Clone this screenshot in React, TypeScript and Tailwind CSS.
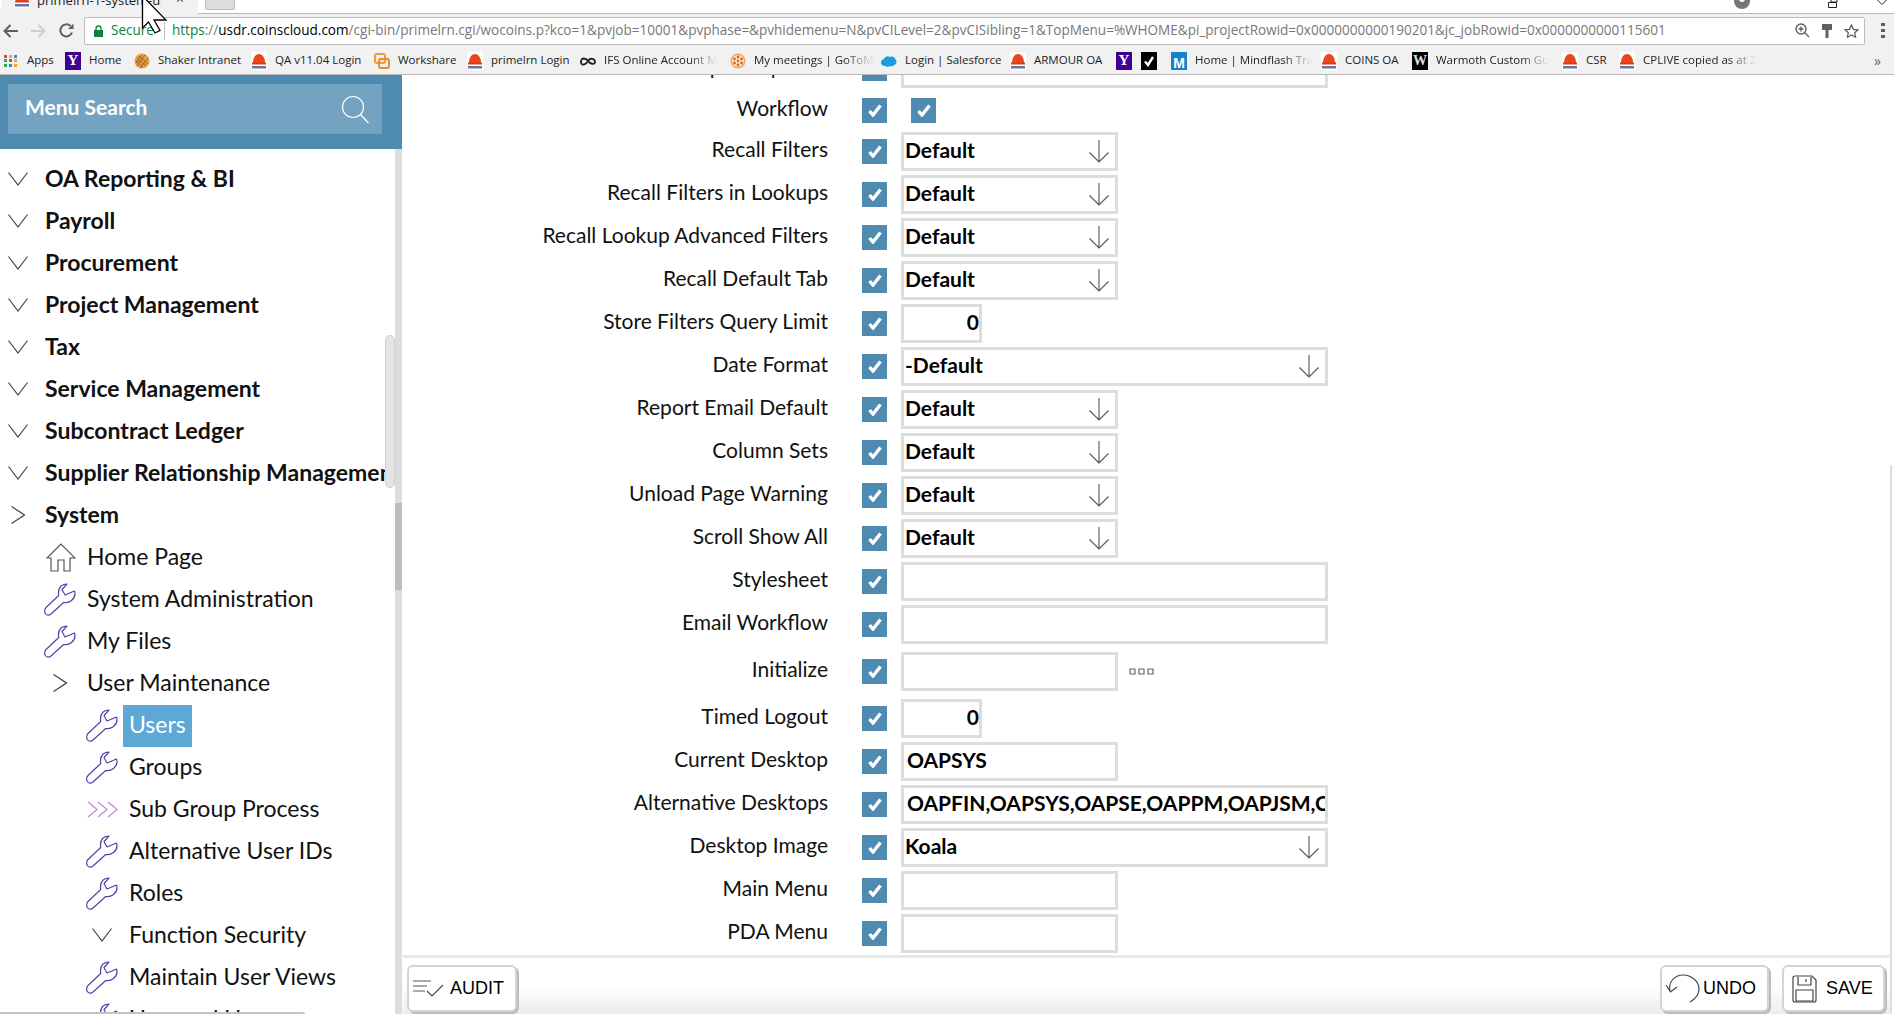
import { ReactNode } from 'react';

const lato = 'font-["Lato",sans-serif]';

function CoinsIcon() {
  return (
    <svg width="16" height="18" viewBox="0 0 16 18" className="shrink-0">
      <rect width="16" height="18" fill="#fff" />
      <path d="M2 11C2 5 5 2 8 2s6 3 6 9z" fill="#e8481c" />
      <rect x="1" y="10.5" width="14" height="2" fill="#d93c12" />
      <rect x="1" y="14" width="14" height="2.5" fill="#33478f" opacity="0.75" />
    </svg>
  );
}

function YahooIcon() {
  return (
    <div className={`w-[16px] h-[18px] shrink-0 bg-[#400090] flex items-center justify-center text-white text-[15px] font-bold leading-none font-["Liberation_Serif",serif]`}>
      Y
    </div>
  );
}

function AppsIcon() {
  const colors = ['#d9453b', '#f2a917', '#3f82ee', '#34a853', '#d9453b', '#f2a917', '#34a853', '#3f82ee', '#f2a917'];
  return (
    <div className="grid grid-cols-3 gap-[1.5px] w-[13px] shrink-0 ml-[1px]">
      {colors.map((c, i) => (
        <svg key={i} width="3" height="3"><rect width="3" height="3" fill={c} /></svg>
      ))}
    </div>
  );
}

function ShakerIcon() {
  return (
    <svg width="16" height="16" viewBox="0 0 16 16" className="shrink-0">
      <circle cx="8" cy="8" r="7.5" fill="#e6a24a" />
      <path d="M3 5l9 8M5 3l9 8M2 8l7 6M11 2l-8 11M14 5l-8 10M8 2l-6 8" stroke="#9a5a12" strokeWidth="0.9" />
    </svg>
  );
}

function WorkshareIcon() {
  return (
    <svg width="16" height="18" viewBox="0 0 16 18" fill="none" className="shrink-0">
      <rect x="1" y="2" width="10" height="9" rx="2" stroke="#ee9a3a" strokeWidth="2" />
      <rect x="5" y="7" width="10" height="9" rx="2" stroke="#ee8a2a" strokeWidth="2" />
    </svg>
  );
}

function IfsIcon() {
  return (
    <svg width="16" height="10" viewBox="0 0 16 10" fill="none" className="shrink-0">
      <path d="M1 6c0-5 5-4 7-1s7 4 7 1-5-5-7-1-7 5-7 1z" stroke="#222" strokeWidth="1.8" />
    </svg>
  );
}

function GoToIcon() {
  return (
    <svg width="16" height="18" viewBox="0 0 16 18" className="shrink-0">
      <circle cx="8" cy="9" r="7.5" fill="#f0a35e" />
      <circle cx="8" cy="9" r="6" fill="#fbe6d2" />
      {[[8, 5], [8, 13], [4.5, 7], [11.5, 7], [4.5, 11], [11.5, 11], [8, 9]].map(([x, y], i) => (
        <circle key={i} cx={x} cy={y} r="1.4" fill="#d9681d" />
      ))}
    </svg>
  );
}

function CloudIcon() {
  return (
    <svg width="16" height="12" viewBox="0 0 16 12" className="shrink-0">
      <path d="M4 11C1 11 0 9 0 7.5S1.5 4 3 4c1-2.5 4-3.5 6-2 2-1 5 0 5.5 2.5C16 5.5 16 10 13 10c-1 1.5-3 1.5-4 1-1.5 1-3.5 1-5 0z" fill="#1b9ddb" />
    </svg>
  );
}

function CheckTile() {
  return (
    <div className="w-[16px] h-[18px] shrink-0 bg-black flex items-center justify-center">
      <svg width="12" height="12" viewBox="0 0 12 12" fill="none">
        <path d="M2 6.5L5 10 10 2" stroke="#fff" strokeWidth="2.4" />
      </svg>
    </div>
  );
}

function MindflashIcon() {
  return (
    <div className="w-[16px] h-[18px] shrink-0 bg-[#1583c9] flex items-end justify-center text-white text-[14px] font-bold leading-none font-['Liberation_Sans',sans-serif]">
      M
    </div>
  );
}

function WarmothIcon() {
  return (
    <div className="w-[16px] h-[18px] shrink-0 bg-black flex items-center justify-center text-[#ddd] text-[14px] font-bold leading-none font-['Liberation_Serif',serif]">
      W
    </div>
  );
}

const bookmarks: { icon: ReactNode; label?: string; width: string; fade?: boolean }[] = [
  { icon: <AppsIcon />, label: 'Apps', width: 'w-[62px]' },
  { icon: <YahooIcon />, label: 'Home', width: 'w-[69px]' },
  { icon: <ShakerIcon />, label: 'Shaker Intranet', width: 'w-[117px]' },
  { icon: <CoinsIcon />, label: 'QA v11.04 Login', width: 'w-[123px]' },
  { icon: <WorkshareIcon />, label: 'Workshare', width: 'w-[93px]' },
  { icon: <CoinsIcon />, label: 'primelrn Login', width: 'w-[113px]' },
  { icon: <IfsIcon />, label: 'IFS Online Account M', width: 'w-[150px]', fade: true },
  { icon: <GoToIcon />, label: 'My meetings | GoToM', width: 'w-[151px]', fade: true },
  { icon: <CloudIcon />, label: 'Login | Salesforce', width: 'w-[129px]' },
  { icon: <CoinsIcon />, label: 'ARMOUR OA', width: 'w-[106px]' },
  { icon: <YahooIcon />, width: 'w-[25px]' },
  { icon: <CheckTile />, width: 'w-[30px]' },
  { icon: <MindflashIcon />, label: 'Home | Mindflash Tra', width: 'w-[150px]', fade: true },
  { icon: <CoinsIcon />, label: 'COINS OA', width: 'w-[91px]' },
  { icon: <WarmothIcon />, label: 'Warmoth Custom Gu', width: 'w-[150px]', fade: true },
  { icon: <CoinsIcon />, label: 'CSR', width: 'w-[57px]' },
  { icon: <CoinsIcon />, label: 'CPLIVE copied as at 2', width: 'w-[145px]', fade: true },
];

function ChevronDown({ className = 'ml-[8px] mr-[17px]' }: { className?: string }) {
  return (
    <svg width="20" height="14" viewBox="0 0 20 14" fill="none" className={`shrink-0 ${className}`}>
      <path d="M0.5 0.5L10 13L19.5 0.5" stroke="#444" strokeWidth="1.2" />
    </svg>
  );
}

function ChevronRight({ className }: { className: string }) {
  return (
    <svg width="14" height="18" viewBox="0 0 14 18" fill="none" className={`shrink-0 ${className}`}>
      <path d="M0.5 0.5L13.5 9L0.5 17.5" stroke="#444" strokeWidth="1.2" />
    </svg>
  );
}

function WrenchIcon() {
  return (
    <svg width="32" height="33" viewBox="0 0 32 33" fill="none" className="shrink-0">
      <path
        d="M14.7 12.5C14 8 15 5 17 3C19 1.5 21 1 23 1L18 6.5L21 12L30.5 8C31.5 11 30.5 15 27.5 17.5C25 19.5 22 20 19.7 19.5L7 31C5 32.5 2.5 32.5 1.3 30.5C0.3 29 0.5 26 2 24.5Z"
        stroke="#5a3fa8"
        strokeWidth="1.2"
        strokeLinejoin="round"
      />
    </svg>
  );
}

function HomeIcon() {
  return (
    <svg width="30" height="29" viewBox="0 0 30 29" fill="none" className="shrink-0">
      <path d="M1 15L15 1L29 15H24V28H18V17H12V28H5V15Z" stroke="#555" strokeWidth="1.2" strokeLinejoin="miter" />
    </svg>
  );
}

function TripleChevron() {
  return (
    <svg width="31" height="17" viewBox="0 0 31 17" fill="none" className="shrink-0">
      <path d="M1 1L10 8.5L1 16M11 1L20 8.5L11 16M21 1L30 8.5L21 16" stroke="#c48ae0" strokeWidth="1.3" />
    </svg>
  );
}

function CheckBox() {
  return (
    <div className="w-[25px] h-[25px] shrink-0 bg-[#4f8bb1] flex items-center justify-center">
      <svg width="14" height="13" viewBox="0 0 14 13" fill="none">
        <path d="M1.5 7L5 11L12.5 1.5" stroke="#fff" strokeWidth="3.4" />
      </svg>
    </div>
  );
}

function SelectBox({ value, width }: { value?: string; width: string }) {
  return (
    <div className={`h-[39px] border-[3px] border-[#ddd] flex items-center justify-between pl-[1px] pr-[6px] ${width}`}>
      <span className="text-[21px] font-bold text-black pb-[3px]">{value}</span>
      <svg width="20" height="23" viewBox="0 0 20 23" fill="none" className="shrink-0">
        <path d="M10 0V22M0.5 12.5L10 22L19.5 12.5" stroke="#555" strokeWidth="1.1" />
      </svg>
    </div>
  );
}

function TextBox({ value, width, right }: { value?: string; width: string; right?: boolean }) {
  return (
    <div className={`h-[39px] border-[3px] border-[#ddd] flex items-center overflow-hidden whitespace-nowrap text-[21px] font-bold text-black pb-[3px] ${right ? 'justify-end pr-[0px]' : 'pl-[3px]'} ${width}`}>
      {value}
    </div>
  );
}

type Row = {
  label: string;
  field: ReactNode;
  rowClass?: string;
};

const sel = 'w-[217px]';
const small = 'w-[81px]';
const wide = 'w-[427px]';

const rows: Row[] = [
  { label: 'Workflow', rowClass: 'h-[40px] pt-[1px]', field: <div className="ml-[10px]"><CheckBox /></div> },
  { label: 'Recall Filters', field: <SelectBox value="Default" width={sel} /> },
  { label: 'Recall Filters in Lookups', field: <SelectBox value="Default" width={sel} /> },
  { label: 'Recall Lookup Advanced Filters', field: <SelectBox value="Default" width={sel} /> },
  { label: 'Recall Default Tab', field: <SelectBox value="Default" width={sel} /> },
  { label: 'Store Filters Query Limit', field: <TextBox value="0" width={small} right /> },
  { label: 'Date Format', field: <SelectBox value="-Default" width={wide} /> },
  { label: 'Report Email Default', field: <SelectBox value="Default" width={sel} /> },
  { label: 'Column Sets', field: <SelectBox value="Default" width={sel} /> },
  { label: 'Unload Page Warning', field: <SelectBox value="Default" width={sel} /> },
  { label: 'Scroll Show All', field: <SelectBox value="Default" width={sel} /> },
  { label: 'Stylesheet', field: <TextBox width={wide} /> },
  { label: 'Email Workflow', field: <TextBox width={wide} /> },
  {
    label: 'Initialize',
    rowClass: 'h-[43px] mt-[4px]',
    field: (
      <div className="flex items-center gap-[11px]">
        <TextBox width={sel} />
        <svg width="25" height="7" viewBox="0 0 25 7" fill="none">
          <path d="M1 1h5v5H1zM10 1h5v5h-5zM19 1h5v5h-5z" stroke="#666" strokeWidth="1.2" />
        </svg>
      </div>
    ),
  },
  { label: 'Timed Logout', rowClass: 'h-[43px] mt-[4px]', field: <TextBox value="0" width={small} right /> },
  { label: 'Current Desktop', field: <TextBox value="OAPSYS" width={sel} /> },
  { label: 'Alternative Desktops', field: <TextBox value="OAPFIN,OAPSYS,OAPSE,OAPPM,OAPJSM,C" width={wide} /> },
  { label: 'Desktop Image', field: <SelectBox value="Koala" width={wide} /> },
  { label: 'Main Menu', field: <TextBox width={sel} /> },
  { label: 'PDA Menu', field: <TextBox width={sel} /> },
];

function FormRow({ label, field, rowClass = 'h-[43px]' }: Row) {
  return (
    <div className={`flex items-center ${rowClass}`}>
      <div className="w-[426px] pb-[6px] text-right text-[21px] text-[#111] whitespace-nowrap">{label}</div>
      <div className="ml-[34px]">
        <CheckBox />
      </div>
      <div className="ml-[14px]">{field}</div>
    </div>
  );
}

function MenuRow({ icon, label, bold, active }: { icon: ReactNode; label: string; bold?: boolean; active?: boolean }) {
  return (
    <div className={`h-[42px] shrink-0 flex items-center whitespace-nowrap text-[23px] text-[#111] ${bold ? 'font-bold' : ''}`}>
      {icon}
      {active ? (
        <span className="ml-[5px] translate-y-[1px] h-[42px] flex items-center pb-[4px] px-[6px] bg-[#5ea8d8] text-white">{label}</span>
      ) : (
        <span className="pb-[1px]">{label}</span>
      )}
    </div>
  );
}

function IconSlot({ children, width }: { children: ReactNode; width: string }) {
  return <div className={`shrink-0 flex items-center ${width}`}>{children}</div>;
}

function FooterButton({ children, width }: { children: ReactNode; width: string }) {
  return (
    <div className={`h-[47px] flex items-center rounded-[6px] bg-white border-2 border-[#d4d4d4] shadow-[2px_2px_0_#bbb] text-[18px] text-black font-['Liberation_Sans',sans-serif] ${width}`}>
      {children}
    </div>
  );
}

const topLevel = ['OA Reporting & BI', 'Payroll', 'Procurement', 'Project Management', 'Tax', 'Service Management', 'Subcontract Ledger', 'Supplier Relationship Management'];

export default function App() {
  return (
    <div className={`relative w-[1894px] h-[1014px] overflow-hidden bg-white flex flex-col ${lato}`}>
      {/* tab strip */}
      <div className="h-[14px] shrink-0 flex bg-white border-b border-[#b8b8b8] font-['Open_Sans',sans-serif]">
        <div className="w-[198px] h-[14px] shrink-0 bg-[#f1f1f1] flex [clip-path:polygon(0_100%,1%_0,100%_0,100%_100%)]">
          <div className="ml-[14px] -mt-[10px] h-[18px]">
            <CoinsIcon />
          </div>
          <span className="ml-[7px] -mt-[10px] w-[124px] h-[20px] text-[13px] leading-[20px] text-[#222] whitespace-nowrap overflow-hidden">primelrn-1-system-user</span>
          <span className="ml-[15px] -mt-[8px] text-[14px] leading-[14px] text-[#444]">×</span>
        </div>
        <div className="ml-[7px] w-[30px] h-[10px] bg-[#dcdcdc] border-x border-b border-[#bbb] rounded-b-[2px]" />
        <div className="ml-auto flex">
          <svg width="16" height="9" viewBox="0 0 16 9" className="mr-[78px]">
            <circle cx="8" cy="1" r="8" fill="#777" />
            <circle cx="8" cy="-1" r="3" fill="#fff" />
          </svg>
          <svg width="12" height="8" viewBox="0 0 12 8" fill="none" className="mr-[36px]">
            <path d="M3 0V2H9V0M0.5 2.5H8.5V7.5H0.5Z" stroke="#222" />
          </svg>
          <svg width="12" height="5" viewBox="0 0 12 5" fill="none" className="mr-[6px]">
            <path d="M0.5 -1L6 4.5L11.5 -1" stroke="#222" />
          </svg>
        </div>
      </div>

      {/* address bar */}
      <div className="h-[33px] shrink-0 bg-[#f1f1f1] flex items-center">
        <svg width="16" height="14" viewBox="0 0 16 14" fill="none" className="ml-[3px]">
          <path d="M15 7H2M7.5 1L1.5 7L7.5 13" stroke="#5f5f5f" strokeWidth="2" />
        </svg>
        <svg width="16" height="14" viewBox="0 0 16 14" fill="none" className="ml-[11px]">
          <path d="M1 7H14M8.5 1L14.5 7L8.5 13" stroke="#cfcfcf" strokeWidth="2" />
        </svg>
        <svg width="15" height="15" viewBox="0 0 15 15" fill="none" className="ml-[13px]">
          <path d="M13 9.5A6 6 0 1 1 11.5 3" stroke="#5f5f5f" strokeWidth="2" />
          <path d="M9 6H14.5V0.5Z" fill="#5f5f5f" />
        </svg>
        <div className="ml-[10px] w-[1781px] h-[28px] bg-white border border-[#bcbcbc] rounded-[2px] flex items-center font-['Open_Sans',sans-serif] text-[13.55px] whitespace-nowrap">
          <svg width="9" height="12" viewBox="0 0 9 12" className="ml-[9px]">
            <path d="M2 5V3.5a2.5 2.5 0 0 1 5 0V5" stroke="#0b8043" strokeWidth="1.3" fill="none" />
            <rect y="5" width="9" height="7" fill="#0b8043" />
          </svg>
          <span className="ml-[8px] text-[#0b8043]">Secure</span>
          <span className="ml-[10px] w-px h-[18px] bg-[#bbb]" />
          <span className="ml-[7px] text-[#0b8043]">https</span>
          <span className="text-[#777]">://</span>
          <span className="text-black">usdr.coinscloud.com</span>
          <span className="text-[#777]">/cgi-bin/primelrn.cgi/wocoins.p?kco=1&amp;pvjob=10001&amp;pvphase=&amp;pvhidemenu=N&amp;pvCILevel=2&amp;pvCISibling=1&amp;TopMenu=%WHOME&amp;pi_projectRowid=0x0000000000190201&amp;jc_jobRowid=0x0000000000115601</span>
          <div className="ml-auto flex items-center gap-[12px] pr-[5px]">
            <svg width="15" height="15" viewBox="0 0 15 15" fill="none">
              <circle cx="6" cy="6" r="5" stroke="#5f5f5f" strokeWidth="1.4" />
              <path d="M9.5 9.5L14 14M3.5 6H8.5M6 3.5V8.5" stroke="#5f5f5f" strokeWidth="1.4" />
            </svg>
            <svg width="10" height="14" viewBox="0 0 10 14">
              <path d="M0 0H10V6H6.5V14H3.5V6H0Z" fill="#5f5f5f" />
            </svg>
            <svg width="15" height="14" viewBox="0 0 15 14" fill="none">
              <path d="M7.5 1L9.5 5.3L14 5.8L10.7 8.8L11.6 13.2L7.5 11L3.4 13.2L4.3 8.8L1 5.8L5.5 5.3Z" stroke="#5f5f5f" strokeWidth="1.3" />
            </svg>
          </div>
        </div>
        <div className="ml-[16px] flex flex-col gap-[3px]">
          <span className="w-[4px] h-[3px] bg-[#5f5f5f]" />
          <span className="w-[4px] h-[3px] bg-[#5f5f5f]" />
          <span className="w-[4px] h-[3px] bg-[#5f5f5f]" />
        </div>
      </div>

      {/* bookmarks */}
      <div className="h-[28px] shrink-0 bg-[#f1f1f1] border-b border-[#b8b8b8] flex items-center pl-[3px] font-['Open_Sans',sans-serif] text-[11.5px] text-[#222]">
        {bookmarks.map((b, i) => (
          <div key={i} className={`flex items-center gap-[8px] shrink-0 overflow-hidden ${b.width}`}>
            <IconSlot width="w-[16px]">{b.icon}</IconSlot>
            {b.label && (
              <span className={`whitespace-nowrap pb-[2px] ${b.fade ? '[mask-image:linear-gradient(to_right,black_75%,transparent)]' : ''}`}>{b.label}</span>
            )}
          </div>
        ))}
        <span className="ml-auto mr-[13px] text-[14px] leading-none text-[#666]">»</span>
      </div>

      {/* page */}
      <div className="flex-1 min-h-0 flex">
        <aside className="relative w-[402px] shrink-0 flex flex-col overflow-hidden">
          <div className="h-[74px] shrink-0 bg-[#4f8bb1] pt-[9px] pl-[8px] pr-[20px]">
            <div className="h-[50px] bg-[#74a3c2] flex items-center justify-between pl-[17px] pr-[13px]">
              <span className="text-[21px] font-bold text-white pb-[4px]">Menu Search</span>
              <svg width="28" height="29" viewBox="0 0 28 29" fill="none">
                <circle cx="12" cy="12" r="10.5" stroke="#fff" strokeWidth="1.2" />
                <path d="M19.5 19.5L27.5 28" stroke="#fff" strokeWidth="1.2" />
              </svg>
            </div>
          </div>
          <div className="flex-1 min-h-0 flex">
            <div className="w-[385px] shrink-0 overflow-hidden pt-[9px]">
              {topLevel.map((t) => (
                <MenuRow key={t} bold label={t} icon={<ChevronDown />} />
              ))}
              <MenuRow bold label="System" icon={<ChevronRight className="ml-[11px] mr-[20px]" />} />
              <div className="pl-[44px]">
                <MenuRow label="Home Page" icon={<div className="ml-[2px] mr-[11px]"><HomeIcon /></div>} />
                <MenuRow label="System Administration" icon={<div className="mr-[11px]"><WrenchIcon /></div>} />
                <MenuRow label="My Files" icon={<div className="mr-[11px]"><WrenchIcon /></div>} />
                <MenuRow label="User Maintenance" icon={<ChevronRight className="ml-[9px] mr-[20px]" />} />
              </div>
              <div className="pl-[86px]">
                <MenuRow active label="Users" icon={<WrenchIcon />} />
                <MenuRow label="Groups" icon={<div className="mr-[11px]"><WrenchIcon /></div>} />
                <MenuRow label="Sub Group Process" icon={<div className="ml-[1px] mr-[11px]"><TripleChevron /></div>} />
                <MenuRow label="Alternative User IDs" icon={<div className="mr-[11px]"><WrenchIcon /></div>} />
                <MenuRow label="Roles" icon={<div className="mr-[11px]"><WrenchIcon /></div>} />
                <MenuRow label="Function Security" icon={<ChevronDown className="ml-[6px] mr-[17px]" />} />
                <MenuRow label="Maintain User Views" icon={<div className="mr-[11px]"><WrenchIcon /></div>} />
                <MenuRow label="User and User" icon={<div className="mr-[11px]"><WrenchIcon /></div>} />
              </div>
            </div>
            {/* inner overlay scrollbar */}
            <div className="w-[10px] shrink-0 pt-[186px]">
              <div className="h-[153px] rounded-[5px] bg-[#e4e4e4] border border-[#cfcfcf]" />
            </div>
            <div className="w-[7px] shrink-0 bg-[#ddd] pt-[354px]">
              <div className="h-[87px] bg-[#bdbdbd]" />
            </div>
          </div>
          <div className="absolute left-0 bottom-0 w-[305px] h-[2px] bg-[#c4c4c4] rounded-tr-[2px]" />
        </aside>

        <main className="flex-1 min-w-0 flex flex-col">
          <div className="h-[880px] shrink-0 overflow-hidden">
            <div className="-mt-[28px]">
              <FormRow label="Report Options" field={<TextBox width={wide} />} />
              {rows.map((r) => (
                <FormRow key={r.label} {...r} />
              ))}
            </div>
          </div>
          <div className="flex-1 min-h-0 ml-[1px] mr-[4px] border-t-[3px] border-[#e8e8e8] bg-gradient-to-b from-white from-50% to-[#ececec] pt-[7px] pl-[4px] pr-[5px] flex justify-between">
            <FooterButton width="w-[110px]">
              <svg width="32" height="17" viewBox="0 0 32 17" fill="none" className="ml-[4px]">
                <path d="M0 1H18M0 6H14M0 11H12" stroke="#555" strokeWidth="1.2" />
                <path d="M14 11L19 16L30 5" stroke="#444" strokeWidth="1.1" />
              </svg>
              <span className="ml-[5px]">AUDIT</span>
            </FooterButton>
            <div className="flex gap-[13px]">
              <FooterButton width="w-[109px]">
                <svg width="35" height="29" viewBox="0 0 35 29" fill="none" className="ml-[3px]">
                  <path d="M5 17C3 9 9 1 18 1C26 1 34 7 34 15C34 21 30 25 25 28" stroke="#444" strokeWidth="1.2" />
                  <path d="M1 11L5.5 18L12 13" stroke="#444" strokeWidth="1.2" />
                </svg>
                <span className="ml-[3px]">UNDO</span>
              </FooterButton>
              <FooterButton width="w-[103px]">
                <svg width="25" height="28" viewBox="0 0 25 28" fill="none" className="ml-[8px]">
                  <path d="M1 3Q1 1 3 1H20L24 5V25Q24 27 22 27H3Q1 27 1 25Z" stroke="#444" strokeWidth="1.2" />
                  <path d="M6 2V10H19V2M4 15H21V26H4ZM14 4V7" stroke="#444" strokeWidth="1.2" />
                </svg>
                <span className="ml-[9px]">SAVE</span>
              </FooterButton>
            </div>
          </div>
        </main>
      </div>

      {/* page scrollbar edge on the right */}
      <div className="absolute right-[2px] bottom-0 top-[465px] w-[2px] bg-[#ddd]" />

      {/* mouse pointer from the capture */}
      <svg width="28" height="36" viewBox="0 0 28 36" className="absolute left-[141px] top-0">
        <path d="M1.5 -4V28L7.5 22L14 33L19 30.5L13 20H25L1.5 -4Z" fill="#fff" stroke="#000" strokeWidth="1.3" />
      </svg>
    </div>
  );
}
